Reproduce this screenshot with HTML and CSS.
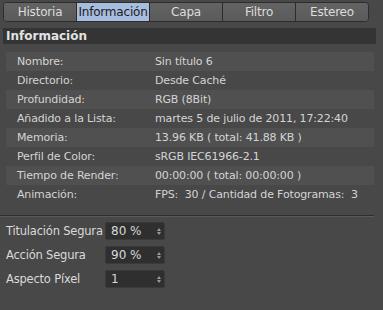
FILE: index.html
```html
<!DOCTYPE html>
<html lang="es">

<head>
    <meta charset="UTF-8">
    <meta name="viewport" content="width=device-width, initial-scale=1.0">
    <title>Información</title>
    <link rel="stylesheet" href="styles.css">
</head>

<body>
    <div class="panel">
        <div class="tabs">
            <div class="tab">Historia</div>
            <div class="tab active">Información</div>
            <div class="tab">Capa</div>
            <div class="tab">Filtro</div>
            <div class="tab">Estereo</div>
        </div>

        <div class="section-title">Información</div>

        <div class="info-list">
            <div class="info-row odd"><span class="label">Nombre:</span><span class="value">Sin título 6</span></div>
            <div class="info-row"><span class="label">Directorio:</span><span class="value">Desde Caché</span></div>
            <div class="info-row odd"><span class="label">Profundidad:</span><span class="value">RGB (8Bit)</span></div>
            <div class="info-row"><span class="label">Añadido a la Lista:</span><span class="value">martes 5 de julio de 2011, 17:22:40</span></div>
            <div class="info-row odd"><span class="label">Memoria:</span><span class="value">13.96 KB ( total: 41.88 KB )</span></div>
            <div class="info-row"><span class="label">Perfil de Color:</span><span class="value">sRGB IEC61966-2.1</span></div>
            <div class="info-row odd"><span class="label">Tiempo de Render:</span><span class="value">00:00:00 ( total: 00:00:00 )</span></div>
            <div class="info-row"><span class="label">Animación:</span><span class="value">FPS:&nbsp; 30 / Cantidad de Fotogramas:&nbsp; 3</span></div>
        </div>

        <div class="divider"></div>

        <div class="fields">
            <div class="field">
                <span class="field-label">Titulación Segura</span>
                <div class="spin-box"><span>80 %</span><span class="arrows"><i class="up"></i><i class="down"></i></span></div>
            </div>
            <div class="field">
                <span class="field-label">Acción Segura</span>
                <div class="spin-box"><span>90 %</span><span class="arrows"><i class="up"></i><i class="down"></i></span></div>
            </div>
            <div class="field">
                <span class="field-label">Aspecto Píxel</span>
                <div class="spin-box"><span>1</span><span class="arrows"><i class="up"></i><i class="down"></i></span></div>
            </div>
        </div>
    </div>
</body>

</html>
```

FILE: styles.css
```css
/* Page */
body {
    margin: 0;
    background-color: #484848;
    font-family: "DejaVu Sans", sans-serif;
    font-size: 11px;
    color: #d4d4d4;
}

.panel {
    width: 383px;
    height: 310px;
    padding-top: 2px;
    box-sizing: border-box;
}

/* Tab bar */
.tabs {
    display: flex;
    margin-left: 3px;
    width: 364px;
    height: 18px;
    border: 1px solid #2c2c2c;
    border-radius: 4px;
    overflow: hidden;
    background-color: #5d5d5d;
}

.tab {
    flex: 1;
    text-align: center;
    line-height: 18px;
    font-size: 12px;
    letter-spacing: -0.2px;
    color: #dcdcdc;
    border-left: 1px solid #2c2c2c;
    background: linear-gradient(#636363, #5a5a5a);
}

.tab:first-child {
    border-left: none;
}

.tab.active {
    background: #a8bcdf;
    color: #1c1c1c;
}

/* Section header */
.section-title {
    margin: 6px 7px 0 3px;
    height: 16px;
    line-height: 16px;
    padding-left: 3px;
    background-color: #343434;
    font-weight: bold;
    font-size: 12px;
    color: #e2e2e2;
}

/* Info rows */
.info-list {
    margin: 8px 9px 0 6px;
}

.info-row {
    display: flex;
    height: 19px;
    line-height: 19px;
    letter-spacing: -0.15px;
}

.info-row.odd {
    background-color: #505050;
}

.label {
    width: 138px;
    padding-left: 11px;
    flex-shrink: 0;
}

.value {
    white-space: nowrap;
}

.divider {
    margin: 11px 9px 0 0;
    height: 1px;
    background-color: #2e2e2e;
    border-bottom: 1px solid #5a5a5a;
}

/* Bottom fields */
.fields {
    margin-top: 5px;
    padding-left: 6px;
    display: flex;
    flex-direction: column;
    gap: 6px;
}

.field {
    display: flex;
    align-items: center;
    height: 18px;
}

.field-label {
    width: 99px;
    white-space: nowrap;
    font-size: 11.5px;
    letter-spacing: -0.2px;
    color: #dadada;
}

.spin-box {
    display: flex;
    align-items: center;
    justify-content: space-between;
    width: 60px;
    height: 18px;
    padding: 0 3px 0 5px;
    box-sizing: border-box;
    background-color: #2f2f2f;
    border: 1px solid #3a3a3a;
    border-radius: 2px;
    font-size: 12px;
    color: #d8d8d8;
}

.arrows {
    display: flex;
    flex-direction: column;
    gap: 1px;
}

.arrows i {
    width: 0;
    height: 0;
    border-left: 2px solid transparent;
    border-right: 2px solid transparent;
}

.arrows .up {
    border-bottom: 3px solid #9a9a9a;
}

.arrows .down {
    border-top: 3px solid #9a9a9a;
}
```
